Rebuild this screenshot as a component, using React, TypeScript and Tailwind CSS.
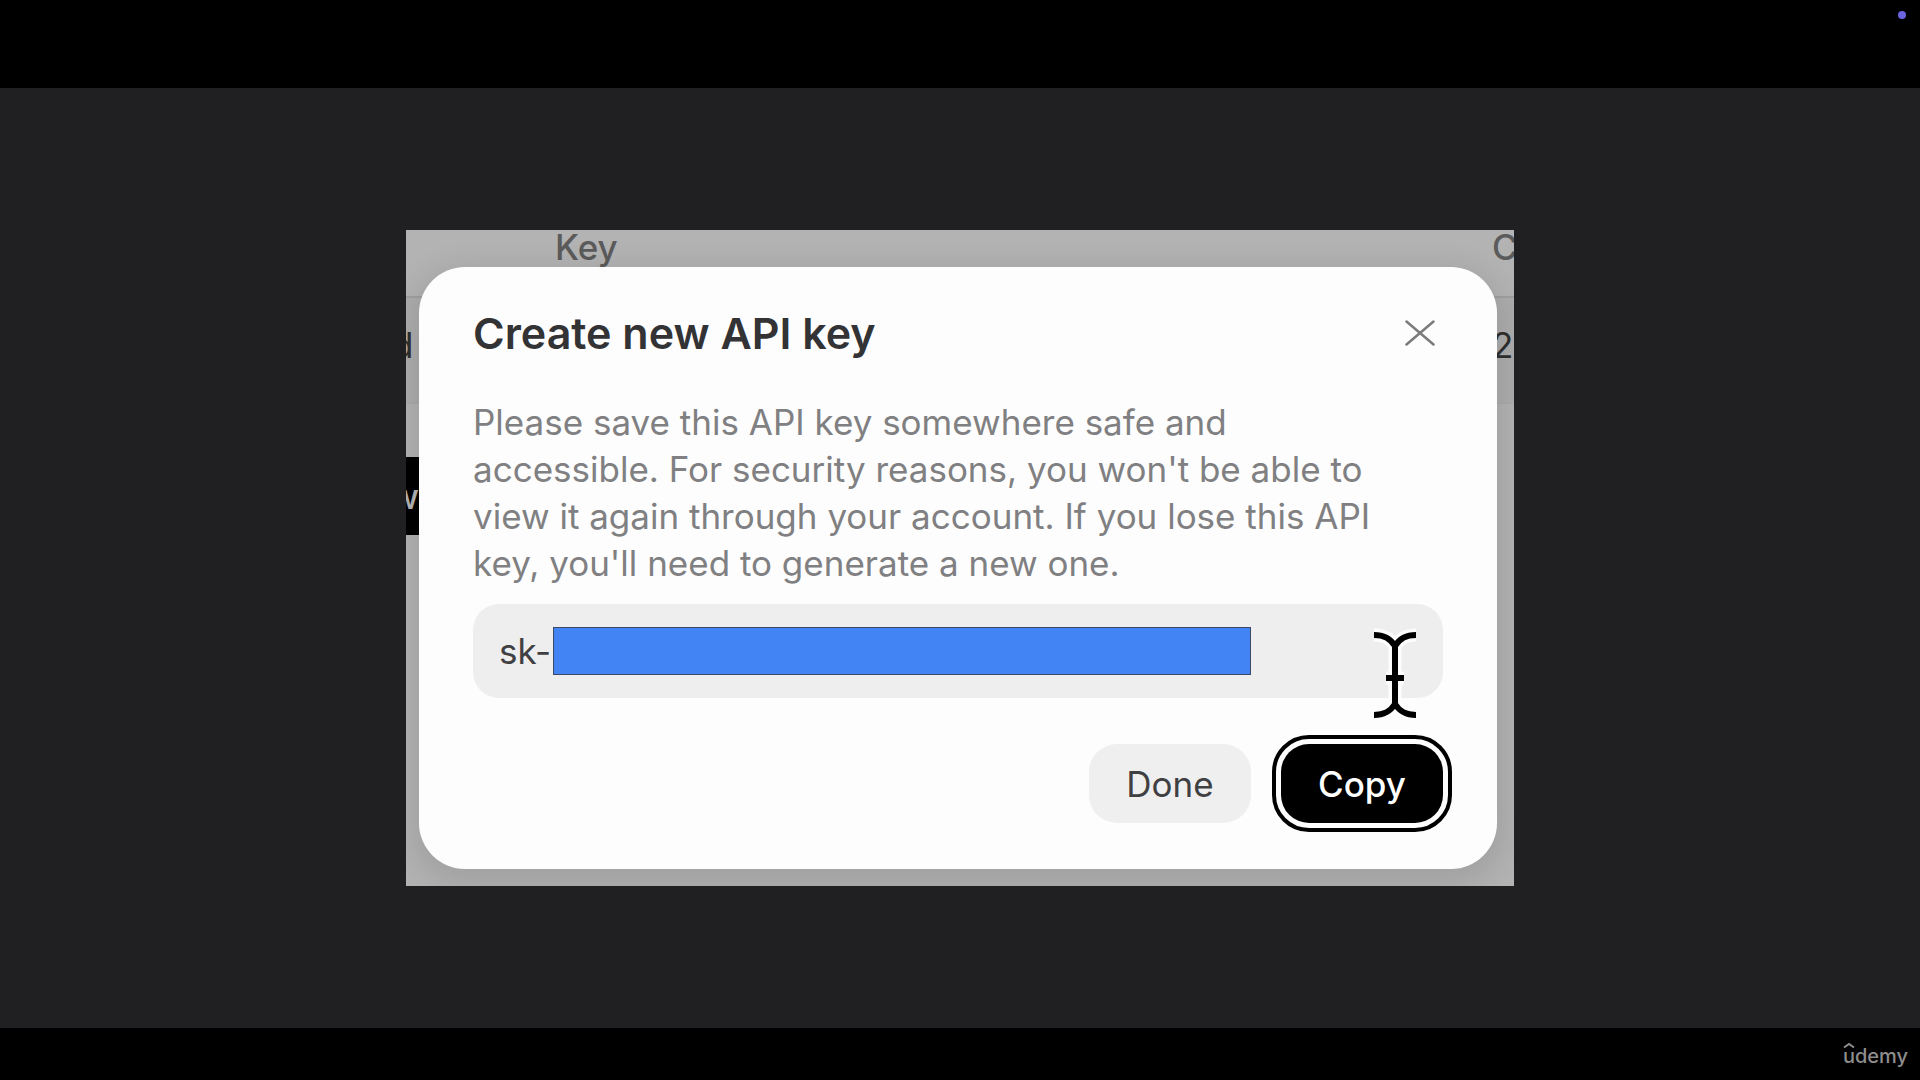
import { useState } from 'react';

function CloseIcon() {
  return (
    <svg width="30" height="26" viewBox="0 0 30 26" fill="none" stroke="#7b7b7b" strokeWidth="2.5" strokeLinecap="round">
      <path d="M1.5 1.5 28.5 24.5M28.5 1.5 1.5 24.5" />
    </svg>
  );
}

function TextCursor() {
  const d = 'M3 7C13 7 19 10 24 18C29 10 35 7 45 7M24 15V79M3 87C13 87 19 84 24 76C29 84 35 87 45 87M15 50H33';
  return (
    <svg
      className="absolute top-6 right-6 pointer-events-none"
      width="48"
      height="94"
      viewBox="0 0 48 94"
      fill="none"
    >
      <path d={d} stroke="#fdfdfd" strokeWidth="13" strokeLinejoin="round" />
      <path d={d} stroke="#000" strokeWidth="6" />
    </svg>
  );
}

// the page behind the dialog, dimmed
function KeysPage() {
  return (
    <div className="col-start-1 row-start-1 min-w-0 overflow-hidden text-[35px] leading-9 text-[#2f2f2f]">
      <table className="-ml-3.5 w-[1140px] table-fixed text-left">
        <thead>
          <tr className="h-[67px] border-b-2 border-[#a0a0a0] align-top leading-[34px] text-[#5b5b5b]">
            <th className="w-[163px]" />
            <th className="font-medium">Key</th>
            <th className="w-10 font-medium">C</th>
          </tr>
        </thead>
        <tbody>
          <tr className="h-[106px] border-b border-[#a9a9a9] bg-[#adadad]">
            <td className="pb-2.5">d</td>
            <td />
            <td className="pb-2.5">2</td>
          </tr>
        </tbody>
      </table>
      <button className="mt-[53px] -ml-4 h-[78px] w-12 bg-black text-left font-medium text-[#b5b5b5]">w</button>
    </div>
  );
}

function ApiKeyDialog() {
  const [key, setKey] = useState('sk-');

  return (
    <section
      role="dialog"
      aria-labelledby="dialog-title"
      className="relative col-start-1 row-start-1 mt-[37px] mr-[17px] mb-[17px] ml-[13px] rounded-[46px] bg-[#fdfdfd] pt-11 pr-[54px] pb-[46px] pl-[54px] shadow-[0_8px_30px_8px_rgba(0,0,0,0.1)]"
    >
      <header className="flex items-center justify-between pr-2">
        <h1 id="dialog-title" className="text-[43px] leading-[44px] font-semibold text-[#333336]">
          Create new API key
        </h1>
        <button aria-label="Close">
          <CloseIcon />
        </button>
      </header>

      <p className="mt-11 text-[35px] leading-[47px] text-[#808082]">
        Please save this API key somewhere safe and
        <br />
        accessible. For security reasons, you won't be able to
        <br />
        view it again through your account. If you lose this API
        <br />
        key, you'll need to generate a new one.
      </p>

      <div className="relative mt-[17px] flex h-[94px] items-center rounded-[26px] bg-[#eeeeee] px-[26px]">
        <input
          aria-label="API key"
          value={key}
          onChange={(e) => setKey(e.target.value)}
          className="w-[54px] bg-transparent text-[35px] leading-10 text-[#404042] outline-none"
        />
        <div className="h-12 w-full max-w-[698px] border border-[#3c4a68] bg-[#4284f4]" />
        <TextCursor />
      </div>

      <footer className="mt-[46px] flex justify-end gap-[30px] text-[35px] leading-9">
        <button className="h-[79px] w-[162px] rounded-[28px] bg-[#efefef] text-[#404042]">Done</button>
        <button className="h-[79px] w-[162px] rounded-[28px] bg-black font-medium text-white outline-4 outline-offset-[5px] outline-black">
          Copy
        </button>
      </footer>
    </section>
  );
}

export default function App() {
  return (
    <div className="flex min-h-screen flex-col bg-black font-['Inter',sans-serif]">
      <div className="flex h-[88px] justify-end px-3.5 py-[11px]">
        <span className="size-2 rounded-full bg-[#6c63e0]" />
      </div>

      <main className="flex flex-1 items-center justify-center bg-[#202022]">
        <div className="grid w-full max-w-[1108px] grid-cols-1 overflow-hidden bg-[#b3b3b3]">
          <KeysPage />
          <ApiKeyDialog />
        </div>
      </main>

      <div className="flex h-[52px] items-center justify-end px-3 pt-1">
        <span className="relative text-[20px] leading-6 font-medium text-[#8e8e8e]">
          udemy
          <svg className="absolute -top-0.5 left-0" width="12" height="7" viewBox="0 0 12 7" fill="none" stroke="#8e8e8e" strokeWidth="2">
            <path d="M1 5.5 6 2l5 3.5" />
          </svg>
        </span>
      </div>
    </div>
  );
}
